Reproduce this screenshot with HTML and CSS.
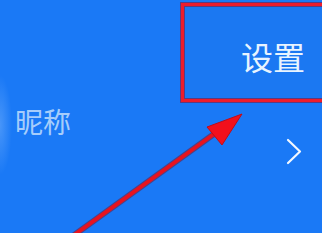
FILE: index.html
```html
<!DOCTYPE html>
<html lang="zh">
<head>
<meta charset="utf-8">
<link rel="stylesheet" href="styles.css">
</head>
<body>
<div class="screen">
  <div class="top-row">
    <div class="settings-btn">设置</div>
  </div>
  <div class="nick-row">
    <span class="nick-label">昵称</span>
    <svg class="chevron" width="16" height="28" viewBox="0 0 16 28">
      <polyline points="2,2 14,13.5 2,25" fill="none" stroke="#f2f8ff" stroke-width="2.2" stroke-linecap="round" stroke-linejoin="round"/>
    </svg>
  </div>
  <svg class="annot" width="322" height="233" viewBox="0 0 322 233">
    <rect x="182.5" y="4.5" width="150" height="96" fill="none" stroke="#8a1030" stroke-width="5" opacity="0.6"/>
    <rect x="182.5" y="4.5" width="150" height="96" fill="none" stroke="#ee1c2b" stroke-width="3"/>
    <line x1="70" y1="238" x2="214" y2="134" stroke="#7a1020" stroke-width="6" opacity="0.5"/>
    <line x1="70" y1="238" x2="214" y2="134" stroke="#e8131f" stroke-width="4"/>
    <polygon points="242,114 207,127 222,145" fill="#f2101c" stroke="#c00c18" stroke-width="1" stroke-linejoin="round"/>
  </svg>
</div>
</body>
</html>
```
FILE: styles.css
```css
html, body {
  margin: 0;
  padding: 0;
}
body {
  width: 322px;
  height: 233px;
  overflow: hidden;
  background: #1a79f6;
  font-family: "Noto Sans CJK SC", "Noto Sans", sans-serif;
}
.screen {
  position: relative;
  width: 322px;
  height: 233px;
  background:
    radial-gradient(ellipse 12px 50px at 0 125px, rgba(170, 210, 255, 0.32), rgba(170, 210, 255, 0) 100%),
    #1a79f6;
  display: flex;
  flex-direction: column;
}
.top-row {
  display: flex;
  justify-content: flex-end;
  padding-top: 5px;
  height: 100px;
  box-sizing: border-box;
}
.settings-btn {
  width: 138px;
  height: 95px;
  box-sizing: border-box;
  padding-left: 57px;
  padding-top: 35px;
  font-size: 32px;
  font-weight: 400;
  line-height: 1;
  color: #e8f4ff;
  background: #1b78f2;
}
.nick-row {
  display: flex;
  align-items: flex-start;
  justify-content: space-between;
  padding: 7px 20px 0 15px;
}
.nick-label {
  font-size: 28px;
  line-height: 1;
  color: #a6cdfb;
}
.chevron {
  margin-top: 31px;
}
.annot {
  position: absolute;
  left: 0;
  top: 0;
  pointer-events: none;
}
```
